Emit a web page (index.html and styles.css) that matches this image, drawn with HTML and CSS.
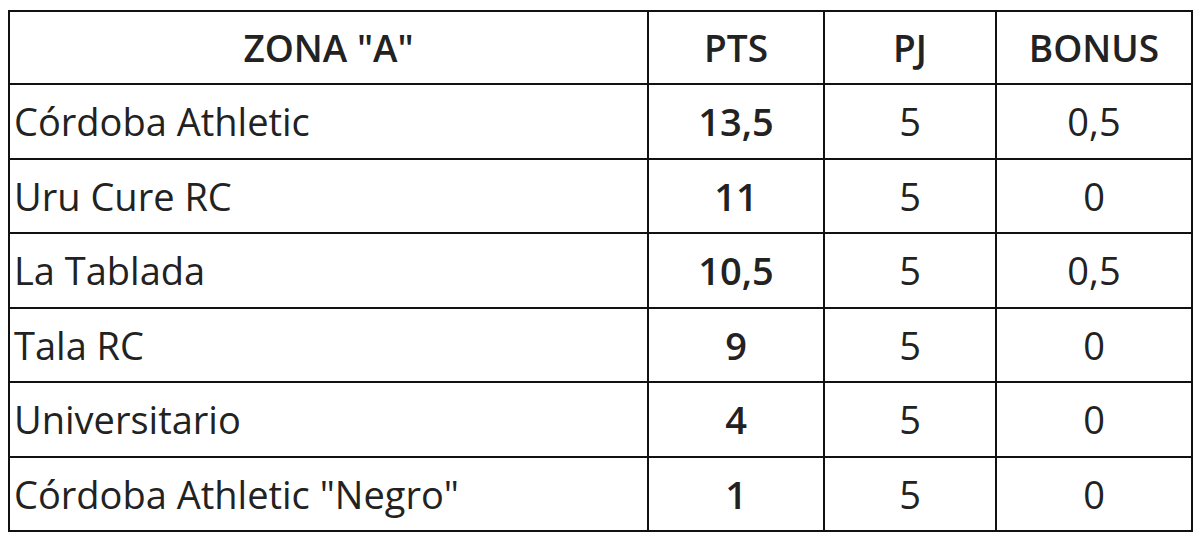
FILE: index.html
```html
<!DOCTYPE html>
<html lang="es">
<head>
<meta charset="utf-8">
<title>Zona A</title>
<link rel="stylesheet" href="styles.css">
</head>
<body>
<table class="standings">
  <colgroup>
    <col class="c-team"><col class="c-pts"><col class="c-pj"><col class="c-bonus">
  </colgroup>
  <thead>
    <tr><th>ZONA "A"</th><th>PTS</th><th>PJ</th><th>BONUS</th></tr>
  </thead>
  <tbody>
    <tr><td class="team">Córdoba Athletic</td><td class="pts">13,5</td><td>5</td><td>0,5</td></tr>
    <tr><td class="team">Uru Cure RC</td><td class="pts">11</td><td>5</td><td>0</td></tr>
    <tr><td class="team">La Tablada</td><td class="pts">10,5</td><td>5</td><td>0,5</td></tr>
    <tr><td class="team">Tala RC</td><td class="pts">9</td><td>5</td><td>0</td></tr>
    <tr><td class="team">Universitario</td><td class="pts">4</td><td>5</td><td>0</td></tr>
    <tr><td class="team">Córdoba Athletic "Negro"</td><td class="pts">1</td><td>5</td><td>0</td></tr>
  </tbody>
</table>
</body>
</html>
```
FILE: styles.css
```css
html, body {
  margin: 0;
  padding: 0;
  background: #ffffff;
}
body {
  padding: 10px 0 0 8px;
  font-family: "Open Sans", "Noto Sans", "DejaVu Sans", sans-serif;
  color: #222222;
}
.standings {
  border-collapse: collapse;
  width: 1183px;
  table-layout: fixed;
}
.c-team { width: 639px; }
.c-pts { width: 176px; }
.c-pj { width: 172px; }
.c-bonus { width: 196px; }
.standings th,
.standings td {
  border: 2px solid #111111;
  height: 72.5px;
  padding: 0;
  text-align: center;
  vertical-align: middle;
  font-size: 38px;
  line-height: 1;
}
.standings th {
  font-weight: 600;
  font-size: 37px;
  height: 71px;
}
.standings td {
  font-weight: 400;
}
.standings td.team {
  text-align: left;
  padding-left: 4px;
}
.standings td.pts {
  font-weight: 600;
}
```
